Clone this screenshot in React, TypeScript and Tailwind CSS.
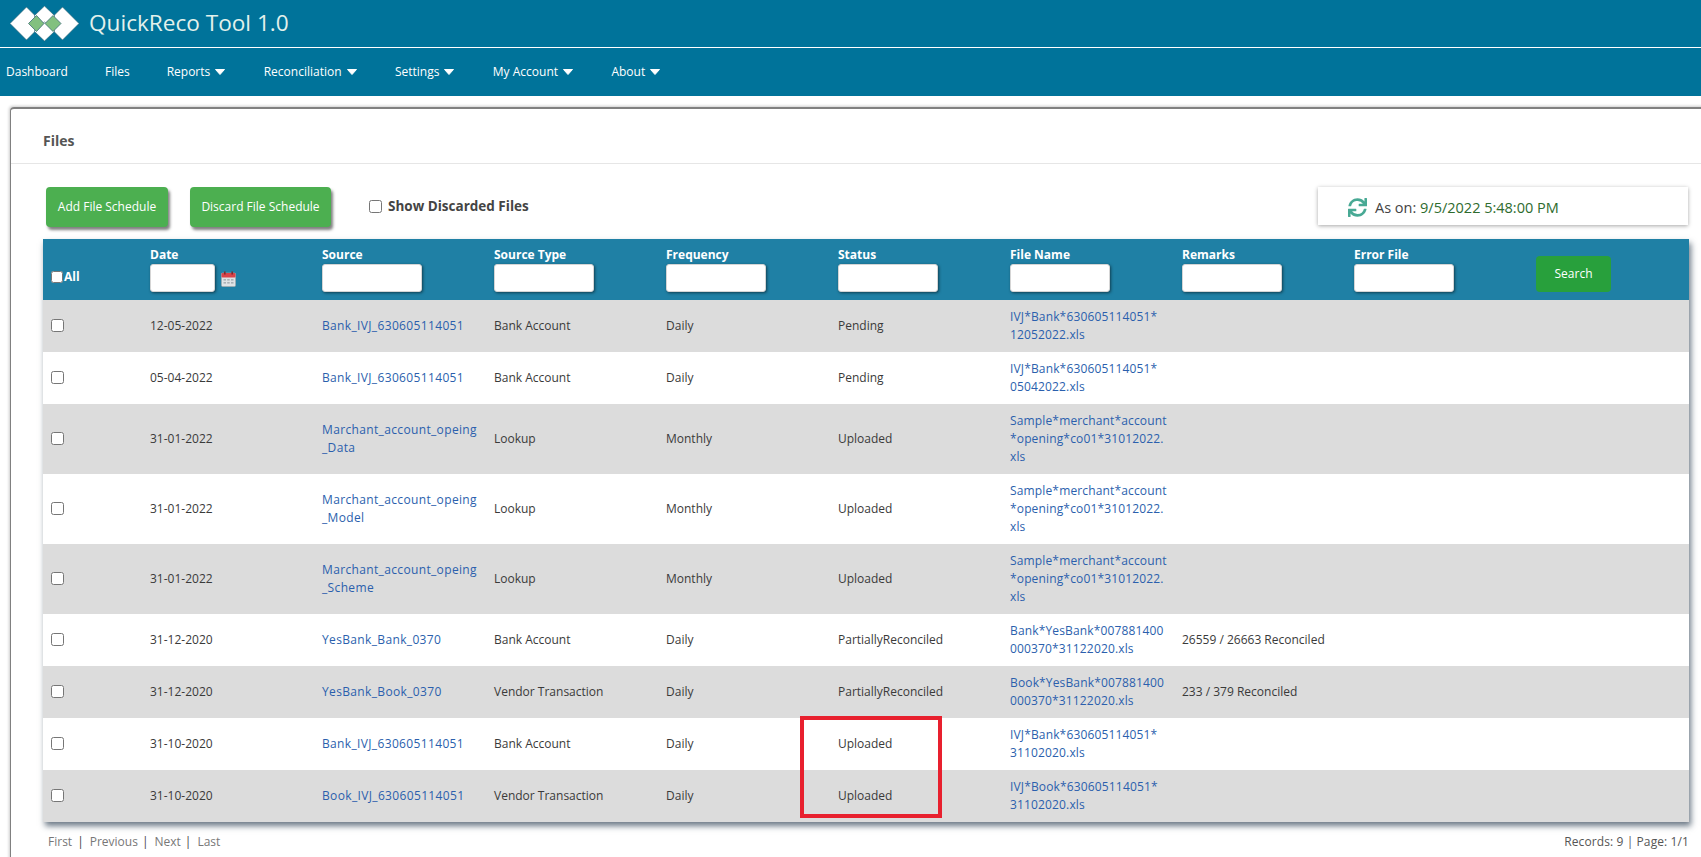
import { FaSync } from "react-icons/fa";

type FileRow = {
  date: string;
  source: string[];
  sourceType: string;
  frequency: string;
  status: string;
  fileName: string[];
  remarks?: string;
};

const rows: FileRow[] = [
  { date: "12-05-2022", source: ["Bank_IVJ_630605114051"], sourceType: "Bank Account", frequency: "Daily", status: "Pending", fileName: ["IVJ*Bank*630605114051*", "12052022.xls"] },
  { date: "05-04-2022", source: ["Bank_IVJ_630605114051"], sourceType: "Bank Account", frequency: "Daily", status: "Pending", fileName: ["IVJ*Bank*630605114051*", "05042022.xls"] },
  { date: "31-01-2022", source: ["Marchant_account_opeing", "_Data"], sourceType: "Lookup", frequency: "Monthly", status: "Uploaded", fileName: ["Sample*merchant*account", "*opening*co01*31012022.", "xls"] },
  { date: "31-01-2022", source: ["Marchant_account_opeing", "_Model"], sourceType: "Lookup", frequency: "Monthly", status: "Uploaded", fileName: ["Sample*merchant*account", "*opening*co01*31012022.", "xls"] },
  { date: "31-01-2022", source: ["Marchant_account_opeing", "_Scheme"], sourceType: "Lookup", frequency: "Monthly", status: "Uploaded", fileName: ["Sample*merchant*account", "*opening*co01*31012022.", "xls"] },
  { date: "31-12-2020", source: ["YesBank_Bank_0370"], sourceType: "Bank Account", frequency: "Daily", status: "PartiallyReconciled", fileName: ["Bank*YesBank*007881400", "000370*31122020.xls"], remarks: "26559 / 26663 Reconciled" },
  { date: "31-12-2020", source: ["YesBank_Book_0370"], sourceType: "Vendor Transaction", frequency: "Daily", status: "PartiallyReconciled", fileName: ["Book*YesBank*007881400", "000370*31122020.xls"], remarks: "233 / 379 Reconciled" },
  { date: "31-10-2020", source: ["Bank_IVJ_630605114051"], sourceType: "Bank Account", frequency: "Daily", status: "Uploaded", fileName: ["IVJ*Bank*630605114051*", "31102020.xls"] },
  { date: "31-10-2020", source: ["Book_IVJ_630605114051"], sourceType: "Vendor Transaction", frequency: "Daily", status: "Uploaded", fileName: ["IVJ*Book*630605114051*", "31102020.xls"] },
];

const filterColumns = ["Source", "Source Type", "Frequency", "Status", "File Name", "Remarks", "Error File"];
const navItems = [
  { label: "Dashboard" },
  { label: "Files" },
  { label: "Reports", menu: true },
  { label: "Reconciliation", menu: true },
  { label: "Settings", menu: true },
  { label: "My Account", menu: true },
  { label: "About", menu: true },
];

function Logo() {
  return (
    <svg width="70" height="36" viewBox="0 0 70 36" className="shrink-0">
      <g fill="#fff" stroke="#2c5f6e" strokeWidth="0.6">
        <polygon points="0,17.5 16.5,1 33,17.5 16.5,34" />
        <polygon points="36,17.5 52.5,1 69,17.5 52.5,34" />
        <polygon points="34.5,0 45,10 34.5,19 24,10" />
        <polygon points="34.5,16 45,25 34.5,35 24,25" />
      </g>
      <g fill="#82c07f" stroke="#2c5f6e" strokeWidth="0.7">
        <polygon points="26.5,9.5 34,17.5 26.5,25.5 18.5,17.5" />
        <polygon points="43,9.5 51,17.5 43,25.5 35,17.5" />
      </g>
    </svg>
  );
}

function Caret() {
  return (
    <svg width="10" height="6" viewBox="0 0 10 6" className="mr-[1.4px] shrink-0">
      <path d="M0.5 0.5h9L5 5.5z" fill="#fff" stroke="#fff" strokeLinejoin="round" />
    </svg>
  );
}

function CalendarIcon() {
  return (
    <svg width="15" height="16" viewBox="0 0 15 16" className="ml-[6px] mt-[7px] inline-block shrink-0">
      <rect x="0.5" y="2" width="14" height="13.5" rx="1" fill="#dfe3e6" stroke="#a9a9a9" strokeWidth="0.6" />
      <rect x="0.5" y="2" width="14" height="4.5" rx="1" fill="#d9434a" />
      <rect x="3" y="0.5" width="1.6" height="3" fill="#7a2a2e" />
      <rect x="10.4" y="0.5" width="1.6" height="3" fill="#7a2a2e" />
      <g fill="#a9b1b6">
        <rect x="2.5" y="8" width="2.5" height="1.6" />
        <rect x="6.2" y="8" width="2.5" height="1.6" />
        <rect x="10" y="8" width="2.5" height="1.6" />
        <rect x="2.5" y="11" width="2.5" height="1.6" />
        <rect x="6.2" y="11" width="2.5" height="1.6" />
        <rect x="10" y="11" width="2.5" height="1.6" />
      </g>
    </svg>
  );
}

function FilterInput({ className = "w-[100px]" }: { className?: string }) {
  return (
    <input
      type="text"
      className={`block h-[28px] rounded-[3px] border border-[#d5d5d5] bg-white shadow-[1px_1px_3px_rgba(0,0,0,0.5)] ${className}`}
    />
  );
}

export default function App() {
  return (
    <div className="relative h-[857px] w-[1701px] overflow-hidden bg-white font-['Open_Sans',sans-serif] text-[12px] text-[#3a3a3a]">
      {/* Brand bar */}
      <header className="flex h-[48px] items-center gap-[9px] border-b border-white bg-[#00739a] pl-[10px]">
        <Logo />
        <span className="text-[22.6px] leading-none text-[#e3f1ec]">QuickReco Tool 1.0</span>
      </header>

      {/* Main nav */}
      <nav className="flex h-[48px] items-center gap-[37px] bg-[#00739a] pl-[6px] text-[12px] text-white">
        {navItems.map((item) => (
          <span key={item.label} className="flex items-center gap-[5px]">
            {item.label}
            {item.menu && <Caret />}
          </span>
        ))}
      </nav>

      {/* Card */}
      <section className="ml-[10px] mt-[11px] h-[760px] w-[1720px] rounded-tl-[4px] border-l border-t-2 border-[#808080] shadow-[-1px_-1px_3px_rgba(0,0,0,0.2)]">
        <div className="flex h-[55px] items-center border-b border-[#e6e6e6] pl-[32px] pt-[8px] text-[14px] font-bold text-[#555]">
          Files
        </div>

        <div className="ml-[32px] w-[1646px]">
          {/* Toolbar */}
          <div className="flex items-start pl-[3px] pr-[1px] pt-[23px]">
            <button className="h-[40px] w-[122px] rounded-[4px] bg-[#4caf50] text-white shadow-[2px_3px_3px_rgba(0,0,0,0.5)]">
              Add File Schedule
            </button>
            <button className="ml-[22px] h-[40px] w-[141px] rounded-[4px] bg-[#4caf50] text-white shadow-[2px_3px_3px_rgba(0,0,0,0.5)]">
              Discard File Schedule
            </button>
            <label className="ml-[38px] flex h-[38px] items-center gap-[6px] text-[13.5px] font-bold text-[#444]">
              <input type="checkbox" className="m-0 size-[13px]" />
              Show Discarded Files
            </label>
            <div className="ml-auto flex h-[38px] w-[370px] items-center gap-[8px] bg-white pl-[30px] pt-[3px] text-[14.5px] shadow-[0_1px_4px_rgba(0,0,0,0.35)]">
              <FaSync className="size-[19px] text-[#48a994]" />
              <span className="text-[#444]">
                As on: <span className="text-[#2e6b2e]">9/5/2022 5:48:00 PM</span>
              </span>
            </div>
          </div>

          {/* Table */}
          <table className="mt-[12px] w-[1646px] table-fixed border-collapse shadow-[2px_4px_6px_rgba(30,50,70,0.65)]">
            <colgroup>
              <col className="w-[107px]" />
              <col className="w-[172px]" span={8} />
              <col />
            </colgroup>
            <thead>
              <tr className="h-[61px] bg-[#1f80a5] text-left align-top font-bold text-white">
                <th className="pb-[17px] pl-[8px] align-bottom">
                  <span className="flex items-center">
                    <input type="checkbox" className="m-0 size-[12px]" />
                    <span className="pl-[1px] text-[12px] leading-[12px]">All</span>
                  </span>
                </th>
                <th className="pb-[8px] pt-[7px] font-bold">
                  <div className="leading-[18px]">Date</div>
                  <div className="flex">
                    <FilterInput className="w-[65px]" />
                    <CalendarIcon />
                  </div>
                </th>
                {filterColumns.map((col) => (
                  <th key={col} className="pb-[8px] pt-[7px] font-bold">
                    <div className="leading-[18px]">{col}</div>
                    <FilterInput />
                  </th>
                ))}
                <th className="pb-[8px] pl-[10px] align-bottom">
                  <button className="h-[36px] w-[75px] rounded-[4px] bg-[#28a03c] font-normal text-white">Search</button>
                </th>
              </tr>
            </thead>
            <tbody>
              {rows.map((row, i) => (
                <tr key={i} className={i % 2 === 0 ? "bg-[#dcdcdc]" : "bg-white"}>
                  <td className="pl-[8px]">
                    <input type="checkbox" className="m-0 mb-[2px] block size-[13px]" />
                  </td>
                  <td>{row.date}</td>
                  <td className="py-[8px] leading-[18px] tracking-[0.35px] text-[#2b5fad]">
                    {row.source.map((line) => (
                      <div key={line}>{line}</div>
                    ))}
                  </td>
                  <td>{row.sourceType}</td>
                  <td>{row.frequency}</td>
                  <td>{row.status}</td>
                  <td className="py-[8px] leading-[18px] tracking-[0.15px] text-[#2b5fad]">
                    {row.fileName.map((line) => (
                      <div key={line}>{line}</div>
                    ))}
                  </td>
                  <td>{row.remarks}</td>
                  <td />
                  <td />
                </tr>
              ))}
            </tbody>
          </table>

          {/* Pager */}
          <div className="flex items-center justify-between pl-[5px] pt-[11px] leading-[18px] text-[#777]">
            <div className="flex items-center">
              <span>First</span>
              <span className="ml-[5px] mr-[6px] text-[#444]">|</span>
              <span>Previous</span>
              <span className="ml-[4px] mr-[6px] text-[#444]">|</span>
              <span>Next</span>
              <span className="ml-[4px] mr-[6px] text-[#444]">|</span>
              <span>Last</span>
            </div>
            <span className="tracking-[0.1px] text-[#555]">Records: 9 | Page: 1/1</span>
          </div>
        </div>
      </section>

      {/* Red annotation drawn over the screenshot */}
      <div className="absolute left-[800px] top-[716px] h-[102px] w-[142px] border-4 border-[#e8202e]" />
    </div>
  );
}
